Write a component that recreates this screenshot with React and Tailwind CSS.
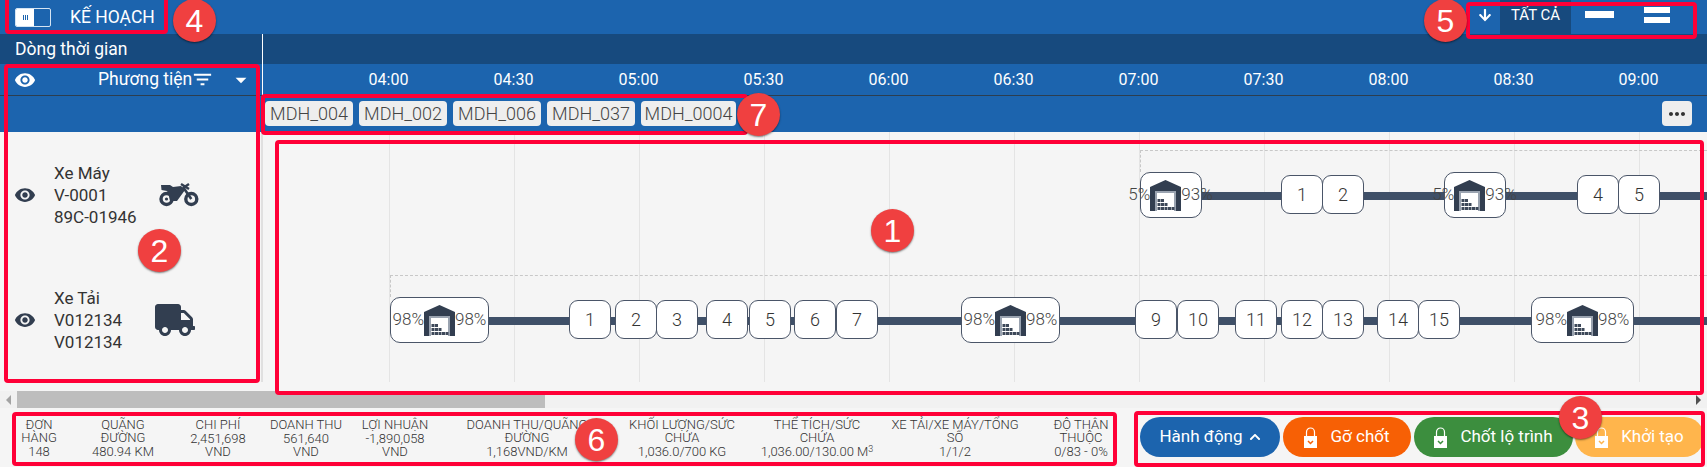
import React from 'react';
import { MdRemoveRedEye, MdFilterList, MdArrowDropDown, MdMoreHoriz } from 'react-icons/md';
import { FaArrowDown, FaChevronUp, FaTruck } from 'react-icons/fa';

const times = ['04:00', '04:30', '05:00', '05:30', '06:00', '06:30', '07:00', '07:30', '08:00', '08:30', '09:00'];
const orders = [
  { name: 'MDH_004', w: 'w-[88px]' },
  { name: 'MDH_002', w: 'w-[88px]' },
  { name: 'MDH_006', w: 'w-[88px]' },
  { name: 'MDH_037', w: 'w-[88px]' },
  { name: 'MDH_0004', w: 'w-[95px]' },
];

// x positions are page coordinates, canvas starts at x=263
const row1Stops = [
  { n: 1, x: 1281 }, { n: 2, x: 1322 }, { n: 4, x: 1577 }, { n: 5, x: 1618 },
];
const row2Stops = [
  { n: 1, x: 569 }, { n: 2, x: 615 }, { n: 3, x: 656 }, { n: 4, x: 706 }, { n: 5, x: 749 },
  { n: 6, x: 794 }, { n: 7, x: 836 }, { n: 9, x: 1135 }, { n: 10, x: 1177 }, { n: 11, x: 1235 },
  { n: 12, x: 1281 }, { n: 13, x: 1322 }, { n: 14, x: 1377 }, { n: 15, x: 1418 },
];

const stats = [
  { w: 'w-[46px]', label: ['ĐƠN', 'HÀNG'], value: ['148'] },
  { w: 'w-[122px]', label: ['QUÃNG', 'ĐƯỜNG'], value: ['480.94 KM'] },
  { w: 'w-[68px]', label: ['CHI PHÍ'], value: ['2,451,698', 'VND'] },
  { w: 'w-[108px]', label: ['DOANH THU'], value: ['561,640', 'VND'] },
  { w: 'w-[70px]', label: ['LỢI NHUẬN'], value: ['-1,890,058', 'VND'] },
  { w: 'w-[194px]', label: ['DOANH THU/QUÃNG', 'ĐƯỜNG'], value: ['1,168VND/KM'] },
  { w: 'w-[116px]', label: ['KHỐI LƯỢNG/SỨC', 'CHỨA'], value: ['1,036.0/700 KG'] },
  { w: 'w-[154px]', label: ['THỂ TÍCH/SỨC', 'CHỨA'], value: ['1,036.00/130.00 M'], sup: '3' },
  { w: 'w-[122px]', label: ['XE TẢI/XE MÁY/TỔNG', 'SỐ'], value: ['1/1/2'] },
  { w: 'w-[130px]', label: ['ĐỘ THÂN', 'THUỘC'], value: ['0/83 - 0%'] },
];

function Warehouse() {
  const boxes = [
    [7.5, 19], [11, 19],
    [7.5, 23], [11, 23], [14.5, 23],
    [7.5, 27], [11, 27], [14.5, 27], [18, 27], [21.5, 27],
  ];
  return (
    <svg width="31" height="31" viewBox="0 0 31 31" className="shrink-0">
      <path d="M0 7 15.5 0 31 7v24h-5V11H5v20H0z" fill="#323e50" />
      <rect x="5" y="11" width="21" height="20" fill="#fff" />
      <path d="M6 31V12h19v19" fill="none" stroke="#9aa3b0" strokeWidth="2" />
      {boxes.map(([x, y], i) => (
        <rect key={i} x={x} y={y} width="3" height="3" fill="#3d4859" />
      ))}
    </svg>
  );
}

function Motorcycle() {
  return (
    <svg width="40" height="24" viewBox="0 0 40 24" className="shrink-0 fill-[#323e50]">
      <circle cx="7.5" cy="16" r="5.5" fill="none" stroke="#323e50" strokeWidth="3.4" />
      <circle cx="32.3" cy="16" r="5.5" fill="none" stroke="#323e50" strokeWidth="3.4" />
      <circle cx="7.5" cy="16" r="1.6" />
      <path d="M2 2h9l3 2 8-1 4 4-8 11h-7l-1.5-6.500L8 8 2.500 7z" />
      <path d="M24 4l8.300 12" fill="none" stroke="#323e50" strokeWidth="2.6" />
      <path d="M22 1l8 5M30 1l-6 4" fill="none" stroke="#323e50" strokeWidth="2.4" />
    </svg>
  );
}

function Depot({ x, left, right, w }) {
  return (
    <div
      className={`absolute z-10 top-0 h-[46px] ${w} bg-white border border-[#4a5568] rounded-[10px] flex items-center justify-center text-[17px] font-light text-[#444]`}
      style={{ left: x - 263 }}
    >
      {left}
      <Warehouse />
      {right}
    </div>
  );
}

function Stop({ n, x }) {
  return (
    <div
      className="absolute z-10 top-[3px] h-[39px] w-[42px] bg-white border border-[#4a5568] rounded-[9px] flex items-center justify-center text-[18px] font-light text-[#333]"
      style={{ left: x - 263 }}
    >
      {n}
    </div>
  );
}

function Lock({ color }) {
  return (
    <svg width="13" height="21" viewBox="0 0 13 21" className="shrink-0">
      <path d="M2.5 10V5a4 4 0 0 1 8 0v5" fill="none" stroke="#fff" strokeWidth="1.2" />
      <rect x="0" y="9" width="13" height="12" fill="#fff" />
      <path d="M4 14l2.5 2.5L9 14" fill="none" stroke={color} strokeWidth="1.5" />
    </svg>
  );
}

function ActionButton({ w, bg, color, children }) {
  return (
    <button className={`${w} ${bg} h-[40px] rounded-full flex items-center justify-center gap-[13px] text-white text-[17px] shrink-0`}>
      {color && <Lock color={color} />}
      <span>{children}</span>
    </button>
  );
}

function Vehicle({ name, code, plate, icon }) {
  return (
    <div className="h-[125px] flex items-center pl-[14px] text-[17px] leading-[22px] text-[#333]">
      <MdRemoveRedEye className="text-[22px] text-[#323e50] shrink-0" />
      <div className="ml-[18px] w-[105px] whitespace-nowrap">
        <div>{name}</div>
        <div>{code}</div>
        <div>{plate}</div>
      </div>
      {icon}
    </div>
  );
}

function Callout({ n, cls }) {
  return (
    <div className={`absolute z-30 w-[43px] h-[43px] rounded-full bg-[#f04040] shadow-[0_1px_2px_rgba(0,0,0,0.5)] flex items-center justify-center text-white text-[32px] font-['Liberation_Sans'] ${cls}`}>
      {n}
    </div>
  );
}

function Box({ cls }) {
  return <div className={`absolute z-20 border-[4px] border-[#ff0037] rounded-[4px] ${cls}`} />;
}

export default function App() {
  return (
    <div className="relative w-[1707px] h-[467px] overflow-hidden bg-[#f5f5f5] font-['Roboto',sans-serif]">
      {/* top bar */}
      <div className="h-[34px] bg-[#1c64ae] flex items-center text-white relative">
        <div className="ml-[15px] w-[36px] h-[19px] border border-[#d5e4f3] rounded-[2px] flex overflow-hidden">
          <div className="w-[18px] bg-white flex items-center justify-center gap-[1px]">
            <div className="w-[1px] h-[5px] bg-[#1c64ae]" />
            <div className="w-[1px] h-[5px] bg-[#1c64ae]" />
            <div className="w-[1px] h-[5px] bg-[#1c64ae]" />
          </div>
        </div>
        <span className="ml-[19px] text-[17.5px]">KẾ HOẠCH</span>
        <div className="ml-auto mr-[37px] flex items-start self-start h-[34px]">
          <FaArrowDown className="text-[14px] mt-[8px] mr-[8px]" />
          <div className="w-[71px] h-[34px] bg-[#174a7e] text-[15px] leading-[20px] text-center pt-[5px]">TẤT CẢ</div>
          <div className="ml-[14px] mt-[11px] w-[29px] h-[7px] bg-white" />
          <div className="ml-[30px] mt-[7px] w-[26px] flex flex-col gap-[4px]">
            <div className="h-[6px] bg-white" />
            <div className="h-[6px] bg-white" />
          </div>
        </div>
      </div>

      {/* timeline label band */}
      <div className="h-[30px] bg-[#174a7e] text-white text-[17.5px] flex">
        <div className="w-[263px] pl-[15px] leading-[30px] border-r border-white">Dòng thời gian</div>
      </div>

      {/* header row */}
      <div className="h-[32px] bg-[#1c64ae] text-white flex border-b border-[#2c3e50]">
        <div className="w-[263px] flex items-center pl-[14px] border-r border-white shrink-0">
          <MdRemoveRedEye className="text-[22px]" />
          <span className="ml-[62px] text-[17.5px]">Phương tiện</span>
          <MdFilterList className="text-[23px] -ml-[1px]" />
          <MdArrowDropDown className="ml-[14px] text-[26px]" />
        </div>
        <div className="flex pl-[63px]">
          {times.map((t) => (
            <div key={t} className="w-[125px] text-center text-[16px] leading-[32px]">{t}</div>
          ))}
        </div>
      </div>

      {/* order chips */}
      <div className="h-[36px] bg-[#1c64ae] flex items-start pt-[5px] pl-[265px] pr-[15px]">
        <div className="flex gap-[6px]">
          {orders.map((o) => (
            <div key={o.name} className={`${o.w} h-[25px] bg-[#eeeeee] rounded-[4px] text-center text-[18px] leading-[25px] font-light text-[#444]`}>
              {o.name}
            </div>
          ))}
        </div>
        <div className="ml-auto w-[30px] h-[25px] bg-[#eeeeee] rounded-[4px] flex items-center justify-center">
          <MdMoreHoriz className="text-[24px] text-[#333]" />
        </div>
      </div>

      {/* body */}
      <div className="h-[250px] flex">
        <div className="w-[263px] shrink-0 border-r-2 border-[#e0e0e0]">
          <Vehicle name="Xe Máy" code="V-0001" plate="89C-01946" icon={<Motorcycle />} />
          <Vehicle
            name="Xe Tải"
            code="V012134"
            plate="V012134"
            icon={<FaTruck className="text-[40px] text-[#323e50] -ml-[4px]" />}
          />
        </div>
        <div className="relative flex-1 overflow-hidden">
          {/* grid */}
          <div className="absolute inset-0 flex pl-[126px]">
            {times.map((t) => (
              <div key={t} className="w-[125px] shrink-0 border-l border-[#e4e4e4]" />
            ))}
          </div>

          {/* row 1 */}
          <div className="absolute left-[877px] right-0 top-[18px] h-[22px] border-l border-t border-dashed border-[#c8c8c8]" />
          <div className="absolute left-0 right-0 top-[40px] h-[46px]">
            <div className="absolute left-[938px] right-0 top-[20px] h-[8px] bg-[#3f5068]" />
            <Depot x={1140} w="w-[62px]" left={<span className="-ml-[14px]">5%</span>} right={<span className="-mr-[13px]">93%</span>} />
            <Depot x={1444} w="w-[62px]" left={<span className="-ml-[14px]">5%</span>} right={<span className="-mr-[13px]">93%</span>} />
            {row1Stops.map((s) => <Stop key={s.x} n={s.n} x={s.x} />)}
          </div>

          {/* row 2 */}
          <div className="absolute left-[127px] right-0 top-[143px] h-[22px] border-l border-t border-dashed border-[#c8c8c8]" />
          <div className="absolute left-0 right-0 top-[165px] h-[46px]">
            <div className="absolute left-[226px] right-0 top-[20px] h-[8px] bg-[#3f5068]" />
            <Depot x={390} w="w-[99px]" left={<span>98%</span>} right={<span>98%</span>} />
            <Depot x={961} w="w-[99px]" left={<span>98%</span>} right={<span>98%</span>} />
            <Depot x={1531} w="w-[103px]" left={<span>98%</span>} right={<span>98%</span>} />
            {row2Stops.map((s) => <Stop key={s.x} n={s.n} x={s.x} />)}
          </div>
        </div>
      </div>

      {/* scrollbar */}
      <div className="mt-[9px] h-[17px] bg-[#f1f1f1] flex items-center">
        <div className="w-[17px] flex justify-center">
          <div className="border-y-[5px] border-r-[5px] border-y-transparent border-r-[#a3a3a3]" />
        </div>
        <div className="w-[528px] h-[17px] bg-[#bdbdbd]" />
        <div className="ml-auto w-[17px] flex justify-center">
          <div className="border-y-[5px] border-l-[5px] border-y-transparent border-l-[#505050]" />
        </div>
      </div>

      {/* bottom stats and actions */}
      <div className="flex items-start pt-[9px]">
        <div className="ml-[16px] w-[1100px] shrink-0 flex pt-[1px] text-[13px] leading-[13px] font-light text-[#333] whitespace-nowrap">
          {stats.map((s) => (
            <div key={s.label[0]} className={`${s.w} shrink-0 flex flex-col items-center`}>
              {s.label.map((l) => <div key={l}>{l}</div>)}
              <div className="h-[1px]" />
              <div>
                {s.value[0]}
                {s.sup && <sup className="text-[9px] leading-none">{s.sup}</sup>}
              </div>
              {s.value[1] && <div>{s.value[1]}</div>}
            </div>
          ))}
        </div>
        <div className="ml-auto mr-[3px] flex">
          <ActionButton w="w-[140px]" bg="bg-[#1c64ae]">
            <span className="inline-flex items-center gap-[6px]">Hành động <FaChevronUp className="text-[12px]" /></span>
          </ActionButton>
          <div className="ml-[3px]"><ActionButton w="w-[128px]" bg="bg-[#f76005]" color="#f76005">Gỡ chốt</ActionButton></div>
          <div className="ml-[3px]"><ActionButton w="w-[159px]" bg="bg-[#3c8e3e]" color="#3c8e3e">Chốt lộ trình</ActionButton></div>
          <div className="ml-[2px]"><ActionButton w="w-[129px]" bg="bg-[#ffb54c]" color="#ffb54c">Khởi tạo</ActionButton></div>
        </div>
      </div>

      {/* annotations drawn over the screenshot */}
      <Box cls="left-[5px] top-[-4px] w-[163px] h-[38px]" />
      <Box cls="left-[1466px] top-[2px] w-[231px] h-[37px]" />
      <Box cls="left-[4px] top-[64px] w-[256px] h-[319px]" />
      <Box cls="left-[261px] top-[94px] w-[487px] h-[41px]" />
      <Box cls="left-[275px] top-[140px] w-[1429px] h-[255px]" />
      <Box cls="left-[12px] top-[412px] w-[1105px] h-[54px]" />
      <Box cls="left-[1134px] top-[411px] w-[571px] h-[56px]" />
      <Callout n="1" cls="left-[871px] top-[209px]" />
      <Callout n="2" cls="left-[138px] top-[229px]" />
      <Callout n="3" cls="left-[1559px] top-[396px]" />
      <Callout n="4" cls="left-[173px] top-[-1px]" />
      <Callout n="5" cls="left-[1424px] top-[-1px]" />
      <Callout n="6" cls="left-[575px] top-[418px]" />
      <Callout n="7" cls="left-[737px] top-[93px]" />
    </div>
  );
}
